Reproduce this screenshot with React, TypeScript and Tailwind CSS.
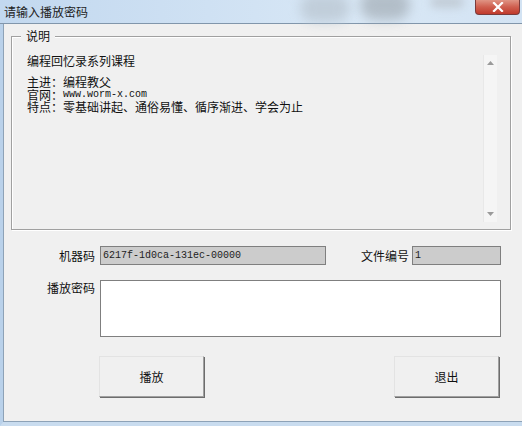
import React from "react";

const cjk = { fontFamily: '"Noto Sans CJK SC", "Noto Sans", sans-serif' };
const mono = { fontFamily: '"Liberation Mono", "Noto Sans CJK SC", monospace' };

function Btn({ label }: { label: string }) {
  return (
    <div className="w-[105px] h-[41px] border border-t-[#e3e3e3] border-l-[#e3e3e3] border-r-[#a0a0a0] border-b-[#a0a0a0] bg-[#f0f0f0] shadow-[1px_1px_0_#6d6d6d] flex items-center justify-center text-[12px] text-[#111]" style={cjk}>
      {label}
    </div>
  );
}

export default function App() {
  return (
    <div className="w-[522px] h-[426px] flex flex-col bg-[#f0f0f0] overflow-hidden" style={cjk}>
      {/* title bar */}
      <div className="relative h-[24px] shrink-0 bg-[linear-gradient(90deg,#c2d8ef_0%,#cfe1f3_40%,#d9e8f6_70%,#d3e3f3_100%)] border-b border-[#8196ab] flex items-start">
        <div className="absolute left-[300px] top-[-6px] w-[50px] h-[28px] rounded-full bg-[#b8c4cf] blur-[6px] opacity-70" />
        <div className="absolute left-[360px] top-[-10px] w-[50px] h-[30px] rounded-full bg-[#9aa3ab] blur-[6px] opacity-60" />
        <div className="absolute left-[430px] top-[-4px] w-[34px] h-[12px] rounded-full bg-[#b5bcc3] blur-[4px] opacity-60" />
        <span className="relative pl-[4px] pt-[4px] text-[12px] leading-[16px] text-[#222]">请输入播放密码</span>
        <div className="absolute right-[2px] top-0 w-[45px] h-[15px] rounded-b-[4px] border border-t-0 border-[#7a3b3b] bg-[linear-gradient(180deg,#e09484_0%,#cf5f4f_50%,#c03a2c_100%)] flex items-center justify-center">
          <svg width="12" height="10" viewBox="0 0 12 10">
            <path d="M2 1 L10 9 M10 1 L2 9" stroke="#ffffff" strokeWidth="2.2" strokeLinecap="square" />
          </svg>
        </div>
      </div>
      {/* body */}
      <div className="flex-1 flex flex-col border-l-[3px] border-l-[#b9d1ea] border-b-[4px] border-b-[#c9dcef]">
        <div className="flex-1 flex flex-col border-l border-l-[#8da2b7] border-b border-b-[#8da2b7]">
          {/* group box */}
          <div className="relative ml-[7px] mt-[12px] w-[500px] h-[194px] border border-[#a0a0a0] shadow-[inset_1px_1px_0_#ffffff,1px_1px_0_#ffffff] flex">
            <span className="absolute left-[9px] top-[-9px] px-[5px] bg-[#f0f0f0] text-[12px] leading-[16px] text-[#111]">说明</span>
            <div className="flex-1 pl-[15px] pt-[17px] text-[12px] text-[#111]">
              <div className="leading-[14px]">编程回忆录系列课程</div>
              <div className="mt-[7px] leading-[13px]">主进：编程教父</div>
              <div className="leading-[13px] flex">
                <span>官网：</span>
                <span className="text-[10px] text-[#111]" style={mono}>www.worm-x.com</span>
              </div>
              <div className="leading-[12px]">特点：零基础讲起、通俗易懂、循序渐进、学会为止</div>
            </div>
            <div className="w-[14px] mr-[13px] mt-[18px] mb-[7px] bg-[#f5f5f5] border-l border-[#e8e8e8] flex flex-col items-center justify-between py-[6px]">
              <svg width="7" height="4" viewBox="0 0 7 4"><path d="M0 4 L3.5 0 L7 4 Z" fill="#9a9a9a" /></svg>
              <svg width="7" height="4" viewBox="0 0 7 4"><path d="M0 0 L3.5 4 L7 0 Z" fill="#9a9a9a" /></svg>
            </div>
          </div>
          {/* machine code row */}
          <div className="flex items-center mt-[16px] h-[19px]">
            <div className="w-[91px] text-right text-[12px] text-[#111]">机器码</div>
            <div className="ml-[5px] w-[226px] h-[19px] bg-[#cccccc] border border-[#7f7f7f] flex items-center pl-[2px] text-[10px] text-[#222]" style={mono}>
              6217f-1d0ca-131ec-00000
            </div>
            <div className="ml-[35px] w-[48px] text-[12px] text-[#111]">文件编号</div>
            <div className="ml-[3px] w-[89px] h-[19px] bg-[#cccccc] border border-[#7f7f7f] flex items-center pl-[2px] text-[10px] text-[#222]" style={mono}>
              1
            </div>
          </div>
          {/* password row */}
          <div className="flex mt-[15px]">
            <div className="w-[91px] text-right text-[12px] leading-[14px] pt-[1px] text-[#111]">播放密码</div>
            <div className="ml-[5px] w-[401px] h-[57px] bg-white border border-[#7f7f7f]" />
          </div>
          {/* buttons */}
          <div className="flex mt-[19px] pl-[95px]">
            <Btn label="播放" />
            <div className="ml-[190px]">
              <Btn label="退出" />
            </div>
          </div>
        </div>
      </div>
    </div>
  );
}
